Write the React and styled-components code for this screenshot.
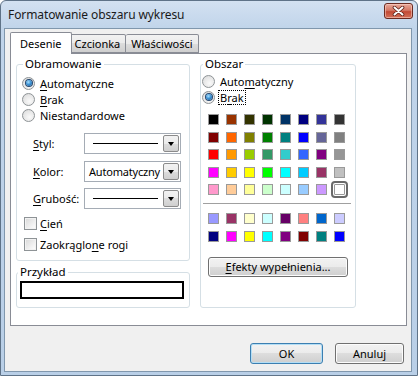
import React from 'react';
import styled, { createGlobalStyle } from 'styled-components';

const uiFont = '"Noto Sans", "DejaVu Sans", sans-serif';
const tabBorder = '#898c95';
const groupBorder = '#d5dfe5';

const palette = [
  ['#000000', '#993300', '#333300', '#003300', '#003366', '#000080', '#333399', '#333333'],
  ['#800000', '#FF6600', '#808000', '#008000', '#008080', '#0000FF', '#666699', '#808080'],
  ['#FF0000', '#FF9900', '#99CC00', '#339966', '#33CCCC', '#3366FF', '#800080', '#969696'],
  ['#FF00FF', '#FFCC00', '#FFFF00', '#00FF00', '#00FFFF', '#00CCFF', '#993366', '#C0C0C0'],
  ['#FF99CC', '#FFCC99', '#FFFF99', '#CCFFCC', '#CCFFFF', '#99CCFF', '#CC99FF', '#FFFFFF'],
];

const chartColors = [
  ['#9999FF', '#993366', '#FFFFCC', '#CCFFFF', '#660066', '#FF8080', '#0066CC', '#CCCCFF'],
  ['#000080', '#FF00FF', '#FFFF00', '#00FFFF', '#800080', '#800000', '#008080', '#0000FF'],
];

const GlobalStyle = createGlobalStyle`
  html, body {
    margin: 0;
    padding: 0;
    overflow: hidden;
    background: #fff;
  }
  body {
    font-family: ${uiFont};
    font-size: 11px;
    color: #000;
  }
`;

const Window = styled.div`
  width: 418px;
  height: 376px;
  box-sizing: border-box;
  display: flex;
  flex-direction: column;
  border: 1px solid #5f7388;
  border-radius: 6px 6px 0 0;
  background: linear-gradient(to bottom, #d3e1f1 0, #c0d4ea 28px, #b9cfe7 100%);
`;

const TitleBar = styled.div`
  height: 27px;
  display: flex;
  align-items: center;
  justify-content: space-between;
  padding: 0 4px 0 7px;
`;

const Title = styled.span`
  font-size: 12px;
  color: #1a1a1a;
  letter-spacing: -0.1px;
`;

const CloseButton = styled.div`
  width: 27px;
  height: 14px;
  margin-top: -7px;
  border: 1px solid #6b2b22;
  border-radius: 3px;
  display: flex;
  align-items: center;
  justify-content: center;
  background: linear-gradient(to bottom, #e9a99b 0, #d47865 45%, #c24a35 55%, #d5715a 100%);
  box-shadow: inset 0 0 0 1px rgba(255, 220, 210, 0.5);
`;

const Client = styled.div`
  flex: 1;
  margin: 0 5px 3px 3px;
  border: 1px solid #8097ad;
  background: #f0f0f0;
  display: flex;
  flex-direction: column;
  padding: 3px 0 0 5px;
`;

const TabStrip = styled.div`
  display: flex;
  align-items: flex-end;
  height: 21px;
  padding-left: 2px;
`;

const Tab = styled.div`
  box-sizing: border-box;
  height: ${p => (p.$active ? '22px' : '19px')};
  margin: ${p => (p.$active ? '0 -2px -1px -2px' : '0')};
  padding: 0 ${p => (p.$active ? '9px' : '5px')};
  border: 1px solid ${tabBorder};
  border-bottom: ${p => (p.$active ? 'none' : `1px solid ${tabBorder}`)};
  border-left-width: ${p => (p.$active ? '1px' : '0')};
  border-radius: 2px 2px 0 0;
  background: ${p =>
    p.$active ? '#fff' : 'linear-gradient(to bottom, #f2f2f2 0, #ebebeb 50%, #dddddd 50%, #cfcfcf 100%)'};
  display: flex;
  align-items: center;
  position: relative;
  z-index: ${p => (p.$active ? 1 : 0)};
  color: #000;
`;

const Panel = styled.div`
  box-sizing: border-box;
  width: 397px;
  height: 273px;
  border: 1px solid ${tabBorder};
  background: #fff;
  padding: 3px 5px 17px 5px;
  display: flex;
  gap: 10px;
  align-items: stretch;
`;

const Column = styled.div`
  width: ${p => p.$width}px;
  display: flex;
  flex-direction: column;
  gap: 4px;
`;

const Group = styled.fieldset`
  margin: 0;
  padding: ${p => p.$pad || '0'};
  border: 1px solid ${groupBorder};
  border-radius: 3px;
  min-width: 0;
  flex: ${p => (p.$grow ? 1 : 'none')};
  display: flex;
  flex-direction: column;
  align-items: flex-start;
`;

const Legend = styled.legend`
  padding: 0 2px;
  margin-left: 1px;
  line-height: 14px;
  font-size: 11.5px;
`;

const Row = styled.div`
  height: ${p => p.$h || 16}px;
  display: flex;
  align-items: center;
  margin-top: ${p => p.$mt || 0}px;
  margin-left: ${p => p.$ml || 0}px;
`;

const RadioCircle = styled.span`
  box-sizing: border-box;
  width: 13px;
  height: 13px;
  border-radius: 50%;
  border: 1px solid #8e9396;
  background: radial-gradient(circle at 60% 65%, #fafafa 0, #e6e6e6 60%, #d4d4d4 100%);
  display: flex;
  align-items: center;
  justify-content: center;
  margin-right: 5px;
  flex: none;

  &::after {
    content: '';
    width: 6px;
    height: 6px;
    border-radius: 50%;
    display: ${p => (p.$checked ? 'block' : 'none')};
    background: radial-gradient(circle at 40% 35%, #a8e0ff 0, #3d93d5 45%, #0f4f8c 100%);
    box-shadow: 0 0 0 1px #26476e;
  }
`;

const CheckBox = styled.span`
  box-sizing: border-box;
  width: 13px;
  height: 13px;
  border: 1px solid #8e9396;
  background: linear-gradient(135deg, #d8d8d8 0, #f4f4f4 70%, #ffffff 100%);
  box-shadow: inset 0 0 0 1px #f2f2f2;
  margin-right: 3px;
  flex: none;
`;

const U = styled.span`
  text-decoration: underline;
  text-underline-offset: 2px;
`;

const Focus = styled.span`
  border: 1px dotted #000;
  padding: 0 1px;
  margin-left: -2px;
  line-height: 13px;
`;

const FieldLabel = styled.span`
  width: 51px;
`;

const Combo = styled.div`
  box-sizing: border-box;
  width: 97px;
  height: 21px;
  border: 1px solid #a5acb5;
  background: #fff;
  display: flex;
  align-items: center;
  padding: 1px;
`;

const ComboValue = styled.div`
  flex: 1;
  display: flex;
  align-items: center;
  padding: 0 1px 0 3px;
  white-space: nowrap;
  letter-spacing: -0.2px;
`;

const LineSample = styled.div`
  flex: 1;
  height: 1px;
  background: #000;
  margin: 0 5px 0 7px;
`;

const DropButton = styled.div`
  box-sizing: border-box;
  width: 16px;
  height: 17px;
  flex: none;
  border: 1px solid #8b8b8b;
  border-radius: 2px;
  background: linear-gradient(to bottom, #f2f2f2 0, #ebebeb 50%, #dddddd 50%, #cfcfcf 100%);
  display: flex;
  align-items: center;
  justify-content: center;

  &::after {
    content: '';
    border-left: 3.5px solid transparent;
    border-right: 3.5px solid transparent;
    border-top: 4px solid #000;
    margin-top: 1px;
  }
`;

const SampleBox = styled.div`
  box-sizing: border-box;
  width: 164px;
  height: 18px;
  margin: 2px 0 4px 3px;
  border: 2px solid #000;
  background: #fff;
`;

const Swatches = styled.div`
  display: grid;
  grid-template-columns: repeat(8, 11px);
  grid-auto-rows: 11px;
  column-gap: 7px;
  row-gap: 6.6px;
  margin-left: 6px;
  margin-top: ${p => p.$mt}px;
`;

const Swatch = styled.div`
  box-sizing: border-box;
  width: 11px;
  height: 11px;
  border: 1px solid #9a9a9a;
  background: ${p => p.$color};
  outline: ${p => (p.$selected ? '2px solid #6a6a6a' : 'none')};
  outline-offset: 1px;
  border-radius: ${p => (p.$selected ? '1px' : '0')};
`;

const Separator = styled.div`
  width: 148px;
  height: 0;
  border-top: 1px solid #a0a0a0;
  margin: 8px 0 0 1px;
`;

const PushButton = styled.div`
  box-sizing: border-box;
  width: ${p => p.$w}px;
  height: ${p => p.$h || 21}px;
  border: 1px solid ${p => (p.$default ? '#3c7fb1' : '#707070')};
  border-radius: 3px;
  background: linear-gradient(to bottom, #f2f2f2 0, #ebebeb 50%, #dddddd 50%, #cfcfcf 100%);
  box-shadow: inset 0 0 0 1px ${p => (p.$default ? '#b4def5' : '#fcfcfc')};
  display: flex;
  align-items: center;
  justify-content: center;
  margin-left: ${p => p.$ml || 0}px;
  margin-top: ${p => p.$mt || 0}px;
`;

const Footer = styled.div`
  display: flex;
  justify-content: flex-end;
  gap: 12px;
  padding: 17px 7px 0 0;
`;

const Radio = ({ checked, children }) => (
  <>
    <RadioCircle $checked={checked} />
    <span>{children}</span>
  </>
);

const ComboRow = ({ label, children, mt }) => (
  <Row $h={21} $mt={mt} $ml={11}>
    <FieldLabel>{label}</FieldLabel>
    <Combo>
      {children}
      <DropButton />
    </Combo>
  </Row>
);

const CloseGlyph = () => (
  <svg width="13" height="10" viewBox="0 0 13 10">
    <path d="M2.5 1.5 L10.5 8.5 M10.5 1.5 L2.5 8.5" stroke="#5a2018" strokeWidth="3.6" strokeLinecap="round" />
    <path d="M2.5 1.5 L10.5 8.5 M10.5 1.5 L2.5 8.5" stroke="#fff" strokeWidth="2" strokeLinecap="round" />
  </svg>
);

export default function App() {
  const mainColors = palette.flat();
  return (
    <>
      <GlobalStyle />
      <Window>
        <TitleBar>
          <Title>Formatowanie obszaru wykresu</Title>
          <CloseButton>
            <CloseGlyph />
          </CloseButton>
        </TitleBar>
        <Client>
          <TabStrip>
            <Tab $active>Desenie</Tab>
            <Tab>Czcionka</Tab>
            <Tab>Właściwości</Tab>
          </TabStrip>
          <Panel>
            <Column $width={174}>
              <Group $pad="4px 0 7px 5px">
                <Legend>Obramowanie</Legend>
                <Row>
                  <Radio checked>
                    <U>A</U>utomatyczne
                  </Radio>
                </Row>
                <Row>
                  <Radio>
                    <U>B</U>rak
                  </Radio>
                </Row>
                <Row>
                  <Radio>Niestandardowe</Radio>
                </Row>
                <ComboRow mt={10} label={<><U>S</U>tyl:</>}>
                  <LineSample />
                </ComboRow>
                <ComboRow mt={7} label={<><U>K</U>olor:</>}>
                  <ComboValue>Automatyczny</ComboValue>
                </ComboRow>
                <ComboRow mt={6} label={<><U>G</U>rubość:</>}>
                  <LineSample />
                </ComboRow>
                <Row $h={18} $mt={5} $ml={2}>
                  <CheckBox />
                  <span>
                    <U>C</U>ień
                  </span>
                </Row>
                <Row $h={18} $mt={3} $ml={2}>
                  <CheckBox />
                  <span>
                    Zaokrąglo<U>n</U>e rogi
                  </span>
                </Row>
              </Group>
              <Group $grow>
                <Legend>Przykład</Legend>
                <SampleBox />
              </Group>
            </Column>
            <Column $width={156}>
              <Group $grow $pad="2px 0 0 1px">
                <Legend>Obszar</Legend>
                <Row>
                  <Radio>
                    Auto<U>m</U>atyczny
                  </Radio>
                </Row>
                <Row>
                  <RadioCircle $checked />
                  <Focus>
                    B<U>r</U>ak
                  </Focus>
                </Row>
                <Swatches $mt={9}>
                  {mainColors.map((c, i) => (
                    <Swatch key={i} $color={c} $selected={i === mainColors.length - 1} />
                  ))}
                </Swatches>
                <Separator />
                <Swatches $mt={9}>
                  {chartColors.flat().map((c, i) => (
                    <Swatch key={i} $color={c} />
                  ))}
                </Swatches>
                <PushButton $w={140} $h={20} $ml={6} $mt={15}>
                  <span>
                    <U>E</U>fekty wypełnienia...
                  </span>
                </PushButton>
              </Group>
            </Column>
          </Panel>
          <Footer>
            <PushButton $w={73} $default>
              OK
            </PushButton>
            <PushButton $w={69}>Anuluj</PushButton>
          </Footer>
        </Client>
      </Window>
    </>
  );
}
